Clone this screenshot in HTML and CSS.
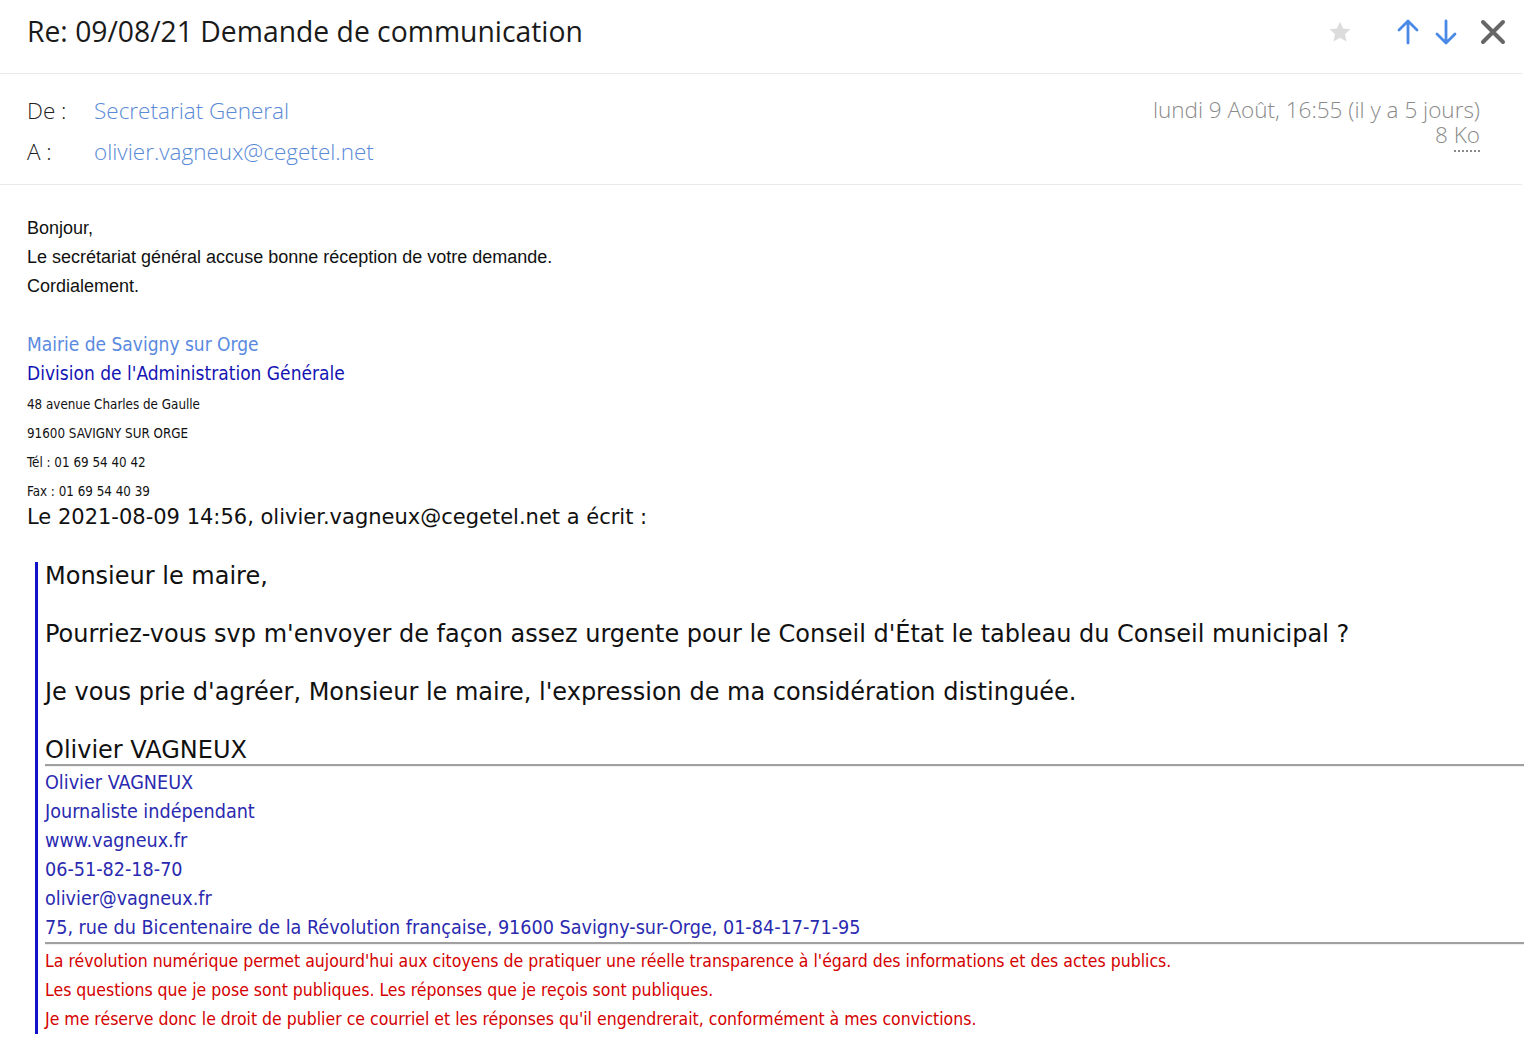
FILE: index.html
```html
<!DOCTYPE html>
<html lang="fr">
<head>
    <meta charset="UTF-8">
    <title>Re: 09/08/21 Demande de communication</title>
    <link rel="stylesheet" href="styles.css">
</head>
<body>
    <div class="mail">
        <header class="mail-head">
            <h1>Re: 09/08/21 Demande de communication</h1>
            <div class="actions">
                <svg class="star" width="26" height="26" viewBox="0 0 24 24"><path d="M12 2.5l2.9 6.3 6.8.7-5.1 4.6 1.5 6.7L12 17.4l-6.1 3.4 1.5-6.7-5.1-4.6 6.8-.7z" fill="#dcdcdc"/></svg>
                <svg class="arrow" width="26" height="28" viewBox="0 0 26 28"><path d="M13 25V4M4 12l9-9 9 9" fill="none" stroke="#4a8ae6" stroke-width="2.8" stroke-linecap="round" stroke-linejoin="round"/></svg>
                <svg class="arrow" width="26" height="28" viewBox="0 0 26 28"><path d="M13 3v21M4 16l9 9 9-9" fill="none" stroke="#4a8ae6" stroke-width="2.8" stroke-linecap="round" stroke-linejoin="round"/></svg>
                <svg class="close" width="28" height="28" viewBox="0 0 28 28"><path d="M4 4l20 20M24 4L4 24" fill="none" stroke="#666" stroke-width="4" stroke-linecap="round"/></svg>
            </div>
        </header>

        <div class="meta">
            <div class="people">
                <div class="row"><span class="label">De :</span><a href="#">Secretariat General</a></div>
                <div class="row"><span class="label">A :</span><a href="#">olivier.vagneux@cegetel.net</a></div>
            </div>
            <div class="info">
                <div class="date">lundi 9 Août, 16:55 (il y a 5 jours)</div>
                <div class="size">8 <abbr title="kilo-octets">Ko</abbr></div>
            </div>
        </div>

        <div class="content">
            <p>Bonjour,</p>
            <p>Le secrétariat général accuse bonne réception de votre demande.</p>
            <p>Cordialement.</p>
            <p>&nbsp;</p>

            <div class="sig-mairie">
                <p class="org">Mairie de Savigny sur Orge</p>
                <p class="div">Division de l'Administration Générale</p>
                <div class="addr">
                    <p>48 avenue Charles de Gaulle</p>
                    <p>91600 SAVIGNY SUR ORGE</p>
                    <p>Tél : 01 69 54 40 42</p>
                    <p>Fax : 01 69 54 40 39</p>
                </div>
            </div>

            <div class="quote-intro">Le 2021-08-09 14:56, olivier.vagneux@cegetel.net a écrit :</div>

            <blockquote>
                <p>Monsieur le maire,</p>
                <p>Pourriez-vous svp m'envoyer de façon assez urgente pour le Conseil d'État le tableau du Conseil municipal ?</p>
                <p>Je vous prie d'agréer, Monsieur le maire, l'expression de ma considération distinguée.</p>
                <p class="name">Olivier VAGNEUX</p>
                <hr>
                <div class="sig">
                    <p>Olivier VAGNEUX</p>
                    <p>Journaliste indépendant</p>
                    <p>www.vagneux.fr</p>
                    <p>06-51-82-18-70</p>
                    <p>olivier@vagneux.fr</p>
                    <p>75, rue du Bicentenaire de la Révolution française, 91600 Savigny-sur-Orge, 01-84-17-71-95</p>
                </div>
                <hr>
                <div class="notice">
                    <p>La révolution numérique permet aujourd'hui aux citoyens de pratiquer une réelle transparence à l'égard des informations et des actes publics.</p>
                    <p>Les questions que je pose sont publiques. Les réponses que je reçois sont publiques.</p>
                    <p>Je me réserve donc le droit de publier ce courriel et les réponses qu'il engendrerait, conformément à mes convictions.</p>
                </div>
            </blockquote>
        </div>
    </div>
</body>
</html>
```

FILE: styles.css
```css
/* General */
body {
    margin: 0;
    padding: 0;
    background-color: #fff;
    color: #111;
    font-family: 'Open Sans', 'Noto Sans', sans-serif;
    overflow: hidden;
}

.mail {
    width: 1524px;
}

/* Header */
.mail-head {
    display: flex;
    align-items: center;
    justify-content: space-between;
    height: 74px;
    padding: 0 27px;
    border-bottom: 1px solid #e9e9e9;
    box-sizing: border-box;
    width: 1522px;
}

.mail-head h1 {
    margin: 0;
    font-size: 28.3px;
    font-weight: normal;
    color: #1a1a1a;
    padding-bottom: 12px;
}

.actions {
    display: flex;
    align-items: center;
    padding-bottom: 10px;
    margin-right: -12px;
}

.actions .star {
    margin-right: 42px;
}

.actions .arrow {
    margin-right: 12px;
}

.actions .close {
    margin-left: 8px;
}

/* Meta */
.meta {
    display: flex;
    justify-content: space-between;
    width: 1522px;
    box-sizing: border-box;
    padding: 16px 42px 0 27px;
    height: 111px;
    border-bottom: 1px solid #e9e9e9;
    font-weight: 300;
}

.people .row {
    display: flex;
    height: 41px;
    align-items: center;
    font-size: 22.5px;
}

.people .label {
    width: 67px;
    color: #222;
}

.people a {
    color: #5a8ad6;
    text-decoration: none;
}

.info {
    text-align: right;
    color: #8a8a8a;
    font-size: 22.5px;
    padding-top: 8px;
}

.info .date {
    line-height: 24px;
}

.info .size {
    line-height: 24px;
    margin-top: 1px;
}

.info abbr {
    text-decoration: none;
    border-bottom: 2px dotted #8a8a8a;
}

/* Message body */
.content {
    padding: 29px 0 0 27px;
    font-family: 'Liberation Sans', Arial, sans-serif;
    font-size: 18px;
    color: #111;
}

.content p {
    margin: 0;
    line-height: 29px;
}

.sig-mairie,
.notice {
    font-family: 'DejaVu Sans Condensed', 'DejaVu Sans', sans-serif;
    font-stretch: condensed;
}

.sig-mairie .org {
    font-size: 19px;
    color: #5a8ae0;
}

.sig-mairie .div {
    font-size: 19px;
    color: #1414b4;
}

.sig-mairie .addr {
    margin-top: 2px;
    font-size: 13.3px;
}

.quote-intro {
    font-family: 'DejaVu Sans', sans-serif;
    font-size: 21px;
    line-height: 24px;
    margin-top: -1px;
}

blockquote {
    margin: 33px 0 0 8px;
    padding: 0 0 0 7px;
    border-left: 3px solid #1212c8;
    font-family: 'DejaVu Sans', sans-serif;
}

blockquote p {
    font-size: 24px;
}

.content blockquote p {
    margin: 0 0 29px;
}

.content blockquote p.name {
    margin: 0 0 -1px;
}

blockquote hr {
    margin: 0;
    border: 0;
    border-top: 2px solid #a0a0a0;
    border-bottom: 1px solid #eee;
}

.content .sig p,
.content .notice p {
    margin: 0;
}

.sig {
    margin-top: 1px;
}

.sig p {
    font-family: 'DejaVu Sans Condensed', 'DejaVu Sans', sans-serif;
    font-size: 19.6px;
    color: #2a2ab0;
}

.notice {
    margin-top: 2px;
}

.notice p {
    font-size: 17.5px;
    color: #d40000;
}
```
